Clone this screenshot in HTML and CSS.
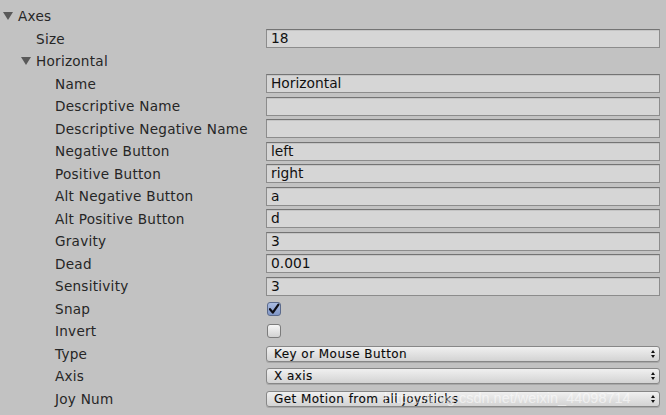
FILE: index.html
```html
<!DOCTYPE html>
<html lang="en">
<head>
    <meta charset="UTF-8">
    <title>Input Manager</title>
    <link rel="stylesheet" href="styles.css">
</head>
<body>
    <div class="inspector">
        <div class="row"><div class="label lv0 foldout">Axes</div></div>
        <div class="row"><div class="label lv1">Size</div><div class="field">18</div></div>
        <div class="row"><div class="label lv1 foldout">Horizontal</div></div>

        <div class="row"><div class="label lv2">Name</div><div class="field">Horizontal</div></div>
        <div class="row"><div class="label lv2">Descriptive Name</div><div class="field"></div></div>
        <div class="row"><div class="label lv2">Descriptive Negative Name</div><div class="field"></div></div>
        <div class="row"><div class="label lv2">Negative Button</div><div class="field">left</div></div>
        <div class="row"><div class="label lv2">Positive Button</div><div class="field">right</div></div>
        <div class="row"><div class="label lv2">Alt Negative Button</div><div class="field">a</div></div>
        <div class="row"><div class="label lv2">Alt Positive Button</div><div class="field">d</div></div>
        <div class="row"><div class="label lv2">Gravity</div><div class="field">3</div></div>
        <div class="row"><div class="label lv2">Dead</div><div class="field">0.001</div></div>
        <div class="row"><div class="label lv2">Sensitivity</div><div class="field">3</div></div>
        <div class="row">
            <div class="label lv2">Snap</div>
            <div><span class="toggle on">
                <svg viewBox="0 0 14 14" width="14" height="14"><path d="M3 7.2 L5.8 10.6 L11.4 2.6" fill="none" stroke="#0d0d14" stroke-width="2.2" stroke-linecap="round" stroke-linejoin="round"/></svg>
            </span></div>
        </div>
        <div class="row"><div class="label lv2">Invert</div><div><span class="toggle"></span></div></div>
        <div class="row"><div class="label lv2">Type</div><div class="popup">Key or Mouse Button<span class="arrows"></span></div></div>
        <div class="row"><div class="label lv2">Axis</div><div class="popup">X axis<span class="arrows"></span></div></div>
        <div class="row"><div class="label lv2">Joy Num</div><div class="popup">Get Motion from all Joysticks<span class="arrows"></span></div></div>
    </div>

    <div class="watermark">https://blog.csdn.net/weixin_44098714</div>
</body>
</html>
```

FILE: styles.css
```css
body {
    margin: 0;
    padding: 0;
    background-color: #c2c2c2;
    font-family: "DejaVu Sans", sans-serif;
    color: #262626;
    overflow: hidden;
}
.inspector {
    padding: 5px 6px 0 0;
}
.row {
    display: grid;
    grid-template-columns: 266px 1fr;
    align-items: center;
    height: 22.5px;
    font-size: 13.6px;
}
.label {
    white-space: nowrap;
    letter-spacing: 0.25px;
}
.lv0 { padding-left: 18px; }
.lv1 { padding-left: 36px; }
.lv2 { padding-left: 55px; }

.foldout {
    position: relative;
}
.foldout::before {
    content: "";
    position: absolute;
    top: 50%;
    margin-top: -4px;
    margin-left: -15.5px;
    border-left: 5px solid transparent;
    border-right: 5px solid transparent;
    border-top: 8px solid #595959;
}

.field {
    height: 17px;
    line-height: 17px;
    padding: 0 4px;
    background-color: #d6d6d6;
    border: 1px solid #8c8c8c;
    border-top-color: #747474;
    box-shadow: inset 0 1px 0 #c4c4c4;
    color: #111;
    font-size: 13.8px;
}

.toggle {
    display: block;
    width: 12px;
    height: 12px;
    margin-left: 1px;
    border: 1px solid #7c7c7c;
    border-radius: 3px;
    background: linear-gradient(#f6f6f6, #d2d2d2);
}
.toggle.on {
    border-color: #5b6a8c;
    background: linear-gradient(#a9bbe0, #8096c6);
}
.toggle svg {
    display: block;
    margin: -1px 0 0 -1px;
}

.popup {
    position: relative;
    height: 14px;
    line-height: 14px;
    padding: 0 7px;
    font-size: 12px;
    letter-spacing: 0.45px;
    color: #0a0a0a;
    -webkit-text-stroke: 0.12px #0a0a0a;
    border: 1px solid #878787;
    border-radius: 3px;
    background: linear-gradient(#f0f0f0, #d3d3d3);
    box-shadow: 0 1px 0 #a8a8a8;
}
.arrows {
    position: absolute;
    right: 5px;
    top: 3px;
    width: 0;
    height: 0;
}
.arrows::before,
.arrows::after {
    content: "";
    position: absolute;
    left: -3px;
    border-left: 2.5px solid transparent;
    border-right: 2.5px solid transparent;
}
.arrows::before {
    top: 0;
    border-bottom: 3.5px solid #111;
}
.arrows::after {
    top: 5px;
    border-top: 3.5px solid #111;
}

.watermark {
    position: absolute;
    left: 384px;
    top: 390px;
    font-family: "Liberation Sans", sans-serif;
    font-size: 14.5px;
    color: rgba(255, 255, 255, 0.55);
    white-space: nowrap;
}
```
